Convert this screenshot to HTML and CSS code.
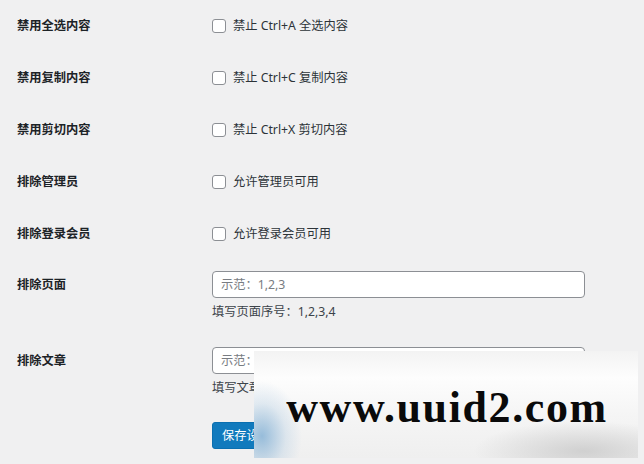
FILE: index.html
```html
<!DOCTYPE html>
<html lang="zh-CN">
<head>
<meta charset="utf-8">
<title>设置</title>
<link rel="stylesheet" href="styles.css">
</head>
<body>
<div class="page">
  <div class="row">
    <div class="th">禁用全选内容</div>
    <div class="td"><label class="check"><input type="checkbox" class="cb">禁止 Ctrl+A 全选内容</label></div>
  </div>
  <div class="row">
    <div class="th">禁用复制内容</div>
    <div class="td"><label class="check"><input type="checkbox" class="cb">禁止 Ctrl+C 复制内容</label></div>
  </div>
  <div class="row">
    <div class="th">禁用剪切内容</div>
    <div class="td"><label class="check"><input type="checkbox" class="cb">禁止 Ctrl+X 剪切内容</label></div>
  </div>
  <div class="row">
    <div class="th">排除管理员</div>
    <div class="td"><label class="check"><input type="checkbox" class="cb">允许管理员可用</label></div>
  </div>
  <div class="row">
    <div class="th">排除登录会员</div>
    <div class="td"><label class="check"><input type="checkbox" class="cb">允许登录会员可用</label></div>
  </div>
  <div class="row text">
    <div class="th">排除页面</div>
    <div class="td">
      <input type="text" class="field" placeholder="示范：1,2,3">
      <p class="desc">填写页面序号：1,2,3,4</p>
    </div>
  </div>
  <div class="row text">
    <div class="th">排除文章</div>
    <div class="td">
      <input type="text" class="field" placeholder="示范：1,2,3">
      <p class="desc">填写文章序号：1,2,3,4</p>
    </div>
  </div>
  <div class="submit">
    <button class="btn" type="button">保存设置</button>
  </div>
</div>
<div class="watermark"><span class="wm-text">www.uuid2.com</span></div>
</body>
</html>
```

FILE: styles.css
```css
html, body {
  margin: 0;
  padding: 0;
}
body {
  background: #f0f0f1;
  color: #1d2327;
  font-family: "Noto Sans", "Noto Sans CJK SC", sans-serif;
  font-size: 12.25px;
  width: 644px;
  height: 464px;
  overflow: hidden;
  position: relative;
}
.page {
  padding-left: 17px;
}
.row {
  display: flex;
}
.th {
  width: 195px;
  flex: none;
  font-weight: 700;
  line-height: 16px;
  padding: 18px 0;
}
.td {
  line-height: 16px;
  padding: 18px 0;
  flex: 1;
}
.check {
  display: flex;
  align-items: center;
  color: #2c3338;
}
.cb {
  appearance: none;
  -webkit-appearance: none;
  width: 14px;
  height: 14px;
  margin: 0 7px 0 0;
  border: 1px solid #8c8f94;
  border-radius: 3px;
  background: #fff;
  box-sizing: border-box;
}
.row.text .th {
  padding-top: 17px;
}
.row.text .td {
  padding-top: 11px;
  padding-bottom: 16px;
}
.field {
  display: block;
  box-sizing: border-box;
  width: 373px;
  height: 27px;
  margin: 0;
  padding: 0 8px;
  border: 1px solid #8c8f94;
  border-radius: 4px;
  background: #fff;
  font-family: inherit;
  font-size: 12.25px;
  color: #2c3338;
}
.field::placeholder {
  color: #787c82;
}
.desc {
  margin: 6px 0 0;
  line-height: 16px;
  color: #3c434a;
}
.submit {
  padding-left: 195px;
  margin-top: 10px;
}
.btn {
  height: 27px;
  padding: 0 9px;
  border: 1px solid #0a6fb0;
  border-radius: 3px;
  background: #117abd;
  color: #fff;
  font-family: inherit;
  font-size: 12.25px;
  line-height: 25px;
}
.watermark {
  position: absolute;
  left: 254px;
  top: 351px;
  width: 384px;
  height: 107px;
  display: flex;
  align-items: center;
  justify-content: center;
  background:
    radial-gradient(ellipse 40px 55px at 8px 85px, rgba(120, 170, 210, 0.75), rgba(170, 200, 225, 0.3) 60%, rgba(240, 240, 240, 0) 100%),
    radial-gradient(ellipse 110px 30px at 330px 100px, rgba(200, 200, 200, 0.8), rgba(235, 235, 235, 0) 100%),
    linear-gradient(to bottom, #f3f3f3 0%, #fdfdfd 25%, #f5f5f5 60%, #efefef 100%);
}
.wm-text {
  font-family: "Liberation Serif", "Times New Roman", serif;
  font-weight: 700;
  font-size: 44px;
  letter-spacing: 1.6px;
  color: #0a0a0a;
  margin-top: 6px;
  margin-left: 2px;
}
```
